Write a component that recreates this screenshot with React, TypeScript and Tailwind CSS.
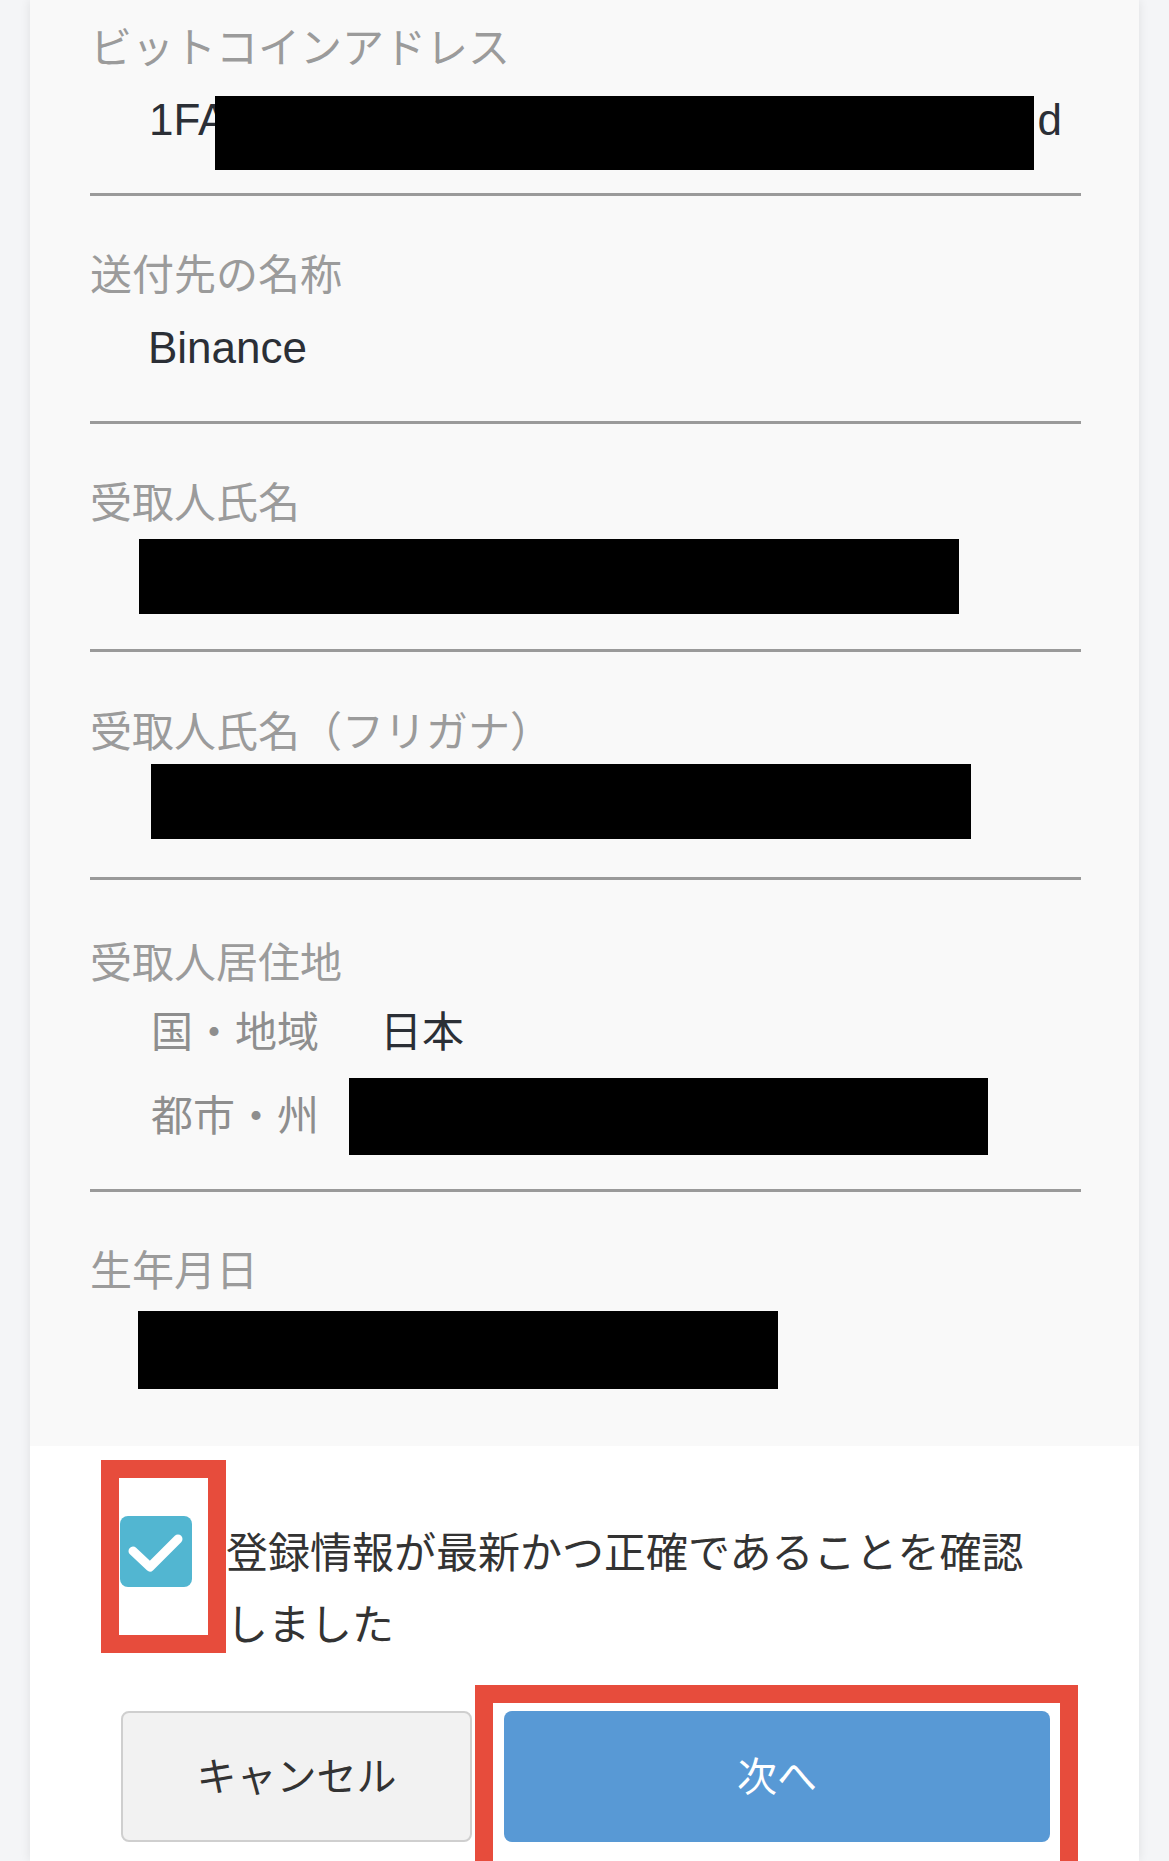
import { ReactNode } from 'react';

const Label = ({ children }: { children: ReactNode }) => (
  <div className="text-[42px] leading-[50px] text-[#9b9b9b] whitespace-nowrap">{children}</div>
);

const Divider = ({ className = '' }: { className?: string }) => (
  <div className={`h-[3px] bg-[#9a9a9a] ${className}`} />
);

const CheckIcon = () => (
  <svg width="72" height="71" viewBox="0 0 72 71">
    <polyline
      points="13,35 30,51 58,23"
      fill="none"
      stroke="white"
      strokeWidth="9"
      strokeLinecap="round"
      strokeLinejoin="round"
    />
  </svg>
);

const App = () => {
  return (
    <div className="w-[1169px] h-[1861px] overflow-hidden bg-[#f4f5f7] px-[30px] font-['Liberation_Sans','Noto_Sans_CJK_JP',sans-serif]">
      <div className="bg-white shadow-[0_0_10px_rgba(0,0,0,0.09)] h-full">
        <div className="bg-[#f9f9f9] pl-[60px] pr-[58px]">
          {/* bitcoin address */}
          <div className="pt-[24px]">
            <Label>ビットコインアドレス</Label>
            <div className="relative mt-[21px] h-[75px] ml-[59px] mr-[19px]">
              <div className="flex justify-between text-[44px] leading-[50px] text-[#2b2f36]">
                <span>1FA</span>
                <span>d</span>
              </div>
              <div className="absolute top-[1px] left-[66px] w-[819px] h-[74px] bg-black" />
            </div>
            <Divider className="mt-[23px]" />
          </div>

          {/* destination name */}
          <div className="pt-[55px]">
            <Label>送付先の名称</Label>
            <div className="mt-[22px] ml-[58px] text-[44px] leading-[50px] text-[#2b2f36]">Binance</div>
            <Divider className="mt-[48px]" />
          </div>

          {/* recipient name */}
          <div className="pt-[55px]">
            <Label>受取人氏名</Label>
            <div className="mt-[10px] ml-[49px] w-[820px] h-[75px] bg-black" />
            <Divider className="mt-[35px]" />
          </div>

          {/* recipient name kana */}
          <div className="pt-[56px]">
            <Label>受取人氏名（フリガナ）</Label>
            <div className="mt-[6px] ml-[61px] w-[820px] h-[75px] bg-black" />
            <Divider className="mt-[38px]" />
          </div>

          {/* residence */}
          <div className="pt-[59px]">
            <Label>受取人居住地</Label>
            <div className="mt-[19px] ml-[61px] flex text-[42px] leading-[50px]">
              <span className="text-[#8e8e8e]">国・地域</span>
              <span className="ml-[61px] text-[#2b2f36]">日本</span>
            </div>
            <div className="mt-[20px] ml-[61px] flex items-center h-[77px]">
              <span className="text-[42px] leading-[50px] text-[#8e8e8e]">都市・州</span>
              <div className="ml-[30px] w-[639px] h-[77px] bg-black" />
            </div>
            <Divider className="mt-[34px]" />
          </div>

          {/* birth date */}
          <div className="pt-[55px] pb-[57px]">
            <Label>生年月日</Label>
            <div className="mt-[14px] ml-[48px] w-[640px] h-[78px] bg-black" />
          </div>
        </div>

        <div className="pt-[14px]">
          <div className="flex items-start ml-[71px]">
            <div className="w-[125px] h-[193px] border-[18px] border-[#e74c3c] bg-white shrink-0">
              <div className="ml-[1px] mt-[38px] w-[72px] h-[71px] rounded-[8px] bg-[#52b6d1] flex items-center justify-center">
                <CheckIcon />
              </div>
            </div>
            <p className="mt-[58px] w-[820px] text-[42px] leading-[72px] text-[#333]">
              登録情報が最新かつ正確であることを確認しました
            </p>
          </div>

          <div className="flex items-start mt-[23px]">
            <button className="ml-[91px] mt-[26px] w-[351px] h-[131px] shrink-0 rounded-[8px] bg-[#f2f2f2] border-2 border-[#cfcfcf] text-[40px] text-[#333]">
              キャンセル
            </button>
            <div className="ml-[3px] w-[603px] h-[200px] shrink-0 border-[18px] border-[#e74c3c] pl-[11px] pt-[8px] pr-[10px] bg-white">
              <button className="w-full h-[131px] rounded-[8px] bg-[#5899d5] text-[40px] text-white">次へ</button>
            </div>
          </div>
        </div>
      </div>
    </div>
  );
};

export default App;
